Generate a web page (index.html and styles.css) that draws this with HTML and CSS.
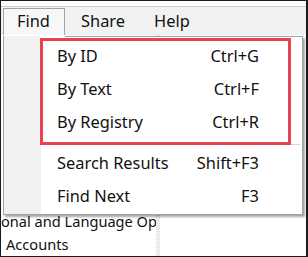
FILE: index.html
```html
<!DOCTYPE html>
<html lang="en">
<head>
    <meta charset="UTF-8">
    <title>Find menu</title>
    <link rel="stylesheet" href="styles.css">
</head>
<body>
    <div class="window">
        <div class="title-strip"></div>
        <nav class="menubar">
            <div class="menu-item open">Find</div>
            <div class="menu-item">Share</div>
            <div class="menu-item">Help</div>
        </nav>

        <main class="content">
            <div class="tree-pane">
                <div class="tree-row clipped">onal and Language Op</div>
                <div class="tree-row">Accounts</div>
            </div>
            <div class="splitter"></div>
            <div class="detail-pane"></div>
        </main>

        <div class="dropdown">
            <div class="gutter"></div>
            <ul class="dropdown-list">
                <li class="dropdown-row"><span>By ID</span><span class="shortcut">Ctrl+G</span></li>
                <li class="dropdown-row"><span>By Text</span><span class="shortcut">Ctrl+F</span></li>
                <li class="dropdown-row"><span>By Registry</span><span class="shortcut">Ctrl+R</span></li>
                <li class="separator"></li>
                <li class="dropdown-row"><span>Search Results</span><span class="shortcut">Shift+F3</span></li>
                <li class="dropdown-row"><span>Find Next</span><span class="shortcut">F3</span></li>
            </ul>
        </div>

        <div class="highlight-box"></div>
    </div>
</body>
</html>
```

FILE: styles.css
```css
* {
    margin: 0;
    padding: 0;
    box-sizing: border-box;
}

body {
    width: 308px;
    height: 257px;
    overflow: hidden;
    background: #fff;
    font-family: 'Noto Sans', sans-serif;
    font-size: 16.4px;
    color: #111;
}

.window {
    position: relative;
    width: 308px;
    height: 257px;
    border: 1px solid #1a1a1a;
    border-right-width: 2px;
    display: flex;
    flex-direction: column;
    overflow: hidden;
}

.title-strip {
    height: 6px;
    background: #fff;
    border-bottom: 1px solid #cfcfcf;
}

.menubar {
    height: 29px;
    background: #f2f2f2;
    display: flex;
    align-items: flex-end;
    padding-left: 2px;
}

.menu-item {
    height: 27px;
    padding: 0 12px 0 15px;
    line-height: 24px;
    border: 1px solid transparent;
    border-bottom: none;
}

.menu-item.open {
    width: 62px;
    background: #f7f7f7;
    border-color: #a3a3a3;
    padding: 0 0 0 13px;
}

.content {
    flex: 1;
    display: flex;
    background: #fff;
}

.tree-pane {
    width: 155px;
    overflow: hidden;
    padding-top: 175px;
    white-space: nowrap;
    font-size: 14.6px;
}

.tree-row {
    height: 23px;
    line-height: 23px;
    padding-left: 5px;
}

.tree-row.clipped {
    padding-left: 0;
}

.splitter {
    width: 4px;
    background: repeating-linear-gradient(#e4e4e4 0 1px, #f6f6f6 1px 2px);
}

.detail-pane {
    flex: 1;
}

.dropdown {
    position: absolute;
    left: 2px;
    top: 35px;
    width: 300px;
    height: 179px;
    background: #fff;
    border: 1px solid #a3a3a3;
    border-top: none;
    box-shadow: 2px 2px 2px rgba(0, 0, 0, 0.35);
    display: flex;
}

.dropdown::before {
    content: '';
    position: absolute;
    left: 61px;
    right: -1px;
    top: 0;
    border-top: 1px solid #a3a3a3;
}

.gutter {
    width: 37px;
    background: #f1f1f1;
}

.dropdown-list {
    flex: 1;
    list-style: none;
    padding: 3px 43px 1px 16px;
}

.dropdown-row {
    height: 33px;
    display: flex;
    align-items: center;
    justify-content: space-between;
    white-space: nowrap;
}

.separator {
    height: 8px;
    padding-top: 6px;
    margin-left: -13px;
    margin-right: -41px;
}

.separator::after {
    content: '';
    display: block;
    border-top: 1px solid #d4d4d4;
}

.highlight-box {
    position: absolute;
    left: 39px;
    top: 37px;
    width: 251px;
    height: 107px;
    border: 3px solid #e8444f;
}
```
